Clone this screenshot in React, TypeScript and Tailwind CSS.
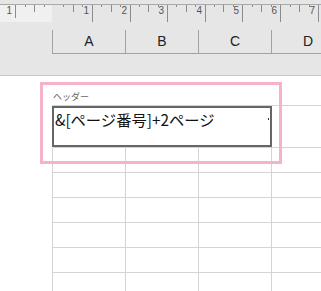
import React from 'react';

const majors = [15, 53.5, 92, 129.5, 167, 204.5, 242, 280, 318, 356];
const labels: [number, string][] = [
  [15, '1'],
  [92, '1'],
  [129.5, '2'],
  [167, '3'],
  [204.5, '4'],
  [242, '5'],
  [280, '6'],
  [318, '7'],
];

const Ruler: React.FC = () => {
  const ticks: { x: number; y2: number }[] = [];
  for (let i = 0; i < majors.length - 1; i++) {
    const a = majors[i];
    const step = (majors[i + 1] - a) / 4;
    ticks.push({ x: a + step, y2: 7 });
    ticks.push({ x: a + step * 2, y2: 12 });
    ticks.push({ x: a + step * 3, y2: 7 });
  }
  return (
    <svg width="321" height="22" className="block">
      <rect x="0" y="5" width="52" height="17" fill="#f0f0f0" />
      <line x1="0" y1="4.5" x2="321" y2="4.5" stroke="#a9a9a9" />
      {ticks.map((t, i) => (
        <line key={i} x1={Math.round(t.x) + 0.5} y1="5" x2={Math.round(t.x) + 0.5} y2={t.y2} stroke="#8c8c8c" />
      ))}
      {labels.map(([x, n], i) => (
        <g key={i}>
          <line x1={Math.round(x) + 0.5} y1="5" x2={Math.round(x) + 0.5} y2={i === 0 ? 18 : 22} stroke="#8c8c8c" />
          <text x={Math.round(x) - 3} y="14" textAnchor="end" fontSize="10" fill="#555" fontFamily="'Liberation Sans', sans-serif">
            {n}
          </text>
        </g>
      ))}
    </svg>
  );
};

const cols = ['A', 'B', 'C', 'D'];

export default function App() {
  return (
    <div className="relative w-[321px] h-[291px] overflow-hidden bg-[#e6e6e6]">
      <Ruler />

      {/* column headers */}
      <div className="mt-[8px] flex h-[24px] border-b border-[#a3a3a3] ml-[52px] font-['Liberation_Sans',sans-serif] text-[14px] text-[#222]">
        {cols.map((c) => (
          <div key={c} className="w-[73px] shrink-0 border-l border-[#a3a3a3] flex items-center justify-center">
            {c}
          </div>
        ))}
      </div>

      {/* page */}
      <div className="mt-[21px] border-t border-[#c8c8c8] bg-white h-[216px]">
        <div className="h-[29px]" />
        <div className="flex flex-col">
          {[41, 24, 24, 24, 24, 24, 24].map((h, r) => (
            <div key={r} className="flex">
              <div className="w-[53px] shrink-0 border-r border-[#d4d4d4]" style={{ height: h + 1 }} />
              {[0, 1, 2].map((c) => (
                <div
                  key={c}
                  className={`w-[73px] shrink-0 border-r border-b border-[#d4d4d4] ${r === 0 ? 'border-t' : ''}`}
                  style={{ height: r === 0 ? h + 2 : h + 1 }}
                />
              ))}
              <div
                className={`flex-1 border-b border-[#d4d4d4] ${r === 0 ? 'border-t' : ''}`}
                style={{ height: r === 0 ? h + 2 : h + 1 }}
              />
            </div>
          ))}
        </div>
      </div>

      {/* header edit overlay */}
      <div className="absolute left-[40px] top-[82px] w-[242px] h-[82px] border-[3px] border-[#f5b2ca]" />
      <div className="absolute left-[53px] top-[91px] text-[9px] leading-[12px] text-[#666] font-['Noto_Sans_CJK_JP',sans-serif]">
        ヘッダー
      </div>
      <div className="absolute left-[52px] top-[106px] w-[220px] h-[41px] border-2 border-[#666] bg-white">
        <div className="pl-[1px] pt-[1px] text-[15.3px] leading-[20px] text-[#111] font-['Noto_Sans_CJK_JP',sans-serif] whitespace-nowrap">
          &amp;[ページ番号]+2ページ
        </div>
        <div className="absolute right-[1px] top-[10px] w-[1px] h-[2px] bg-[#333]" />
      </div>
    </div>
  );
}
